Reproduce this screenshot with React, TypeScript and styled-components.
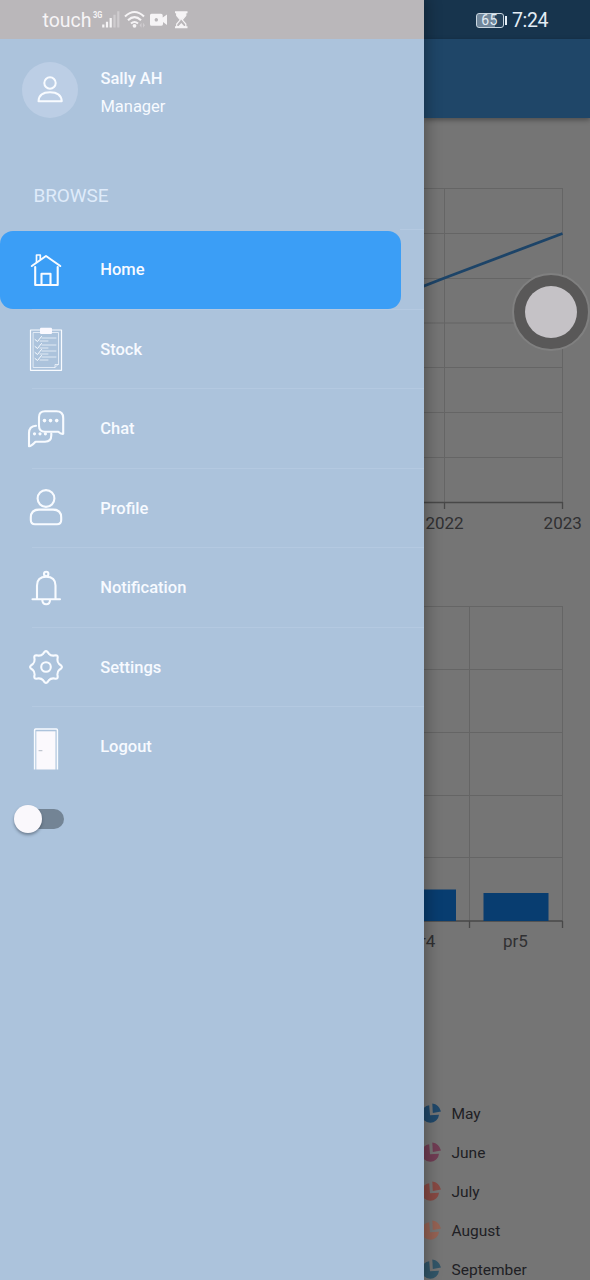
import React from 'react';
import styled, { createGlobalStyle } from 'styled-components';

const Global = createGlobalStyle`
  body { margin: 0; font-family: Roboto, "Liberation Sans", sans-serif; background: #757575; }
  svg { display: block; flex: none; }
`;

const Screen = styled.div`
  position: relative;
  display: flex;
  width: 590px;
  height: 1280px;
  overflow: hidden;
  background: #757575;
`;

const Drawer = styled.aside`
  position: relative;
  z-index: 1;
  display: flex;
  flex-direction: column;
  flex: none;
  width: 423.5px;
  background: #acc3dc;
  box-shadow: 0 0 14px 3px rgba(0, 0, 0, 0.3);
`;

const Page = styled.main`
  display: flex;
  flex-direction: column;
  flex: 1;
  min-width: 0;
`;

const StatusBar = styled.div<{ $dark?: boolean }>`
  display: flex;
  align-items: center;
  box-sizing: border-box;
  flex: none;
  height: 39px;
  padding: ${(p) => (p.$dark ? '2px 0 0 52px' : '2px 0 0 42.5px')};
  background: ${(p) => (p.$dark ? '#17344d' : '#bab7ba')};
  color: ${(p) => (p.$dark ? '#e3edf5' : '#f6f4f6')};
`;

const Carrier = styled.span`
  width: 49.5px;
  font-size: 19.5px;
  letter-spacing: 0;
`;

const Battery = styled.span`
  display: flex;
  align-items: center;
  justify-content: center;
  box-sizing: border-box;
  width: 28px;
  height: 15px;
  border: 1px solid #c9d6e0;
  border-radius: 3px;
  background: linear-gradient(90deg, #71879b 68%, #25425b 68%);
  font-size: 14px;
  letter-spacing: 0.3px;
  line-height: 13px;
`;

const BatteryTip = styled.i`
  width: 2px;
  height: 9px;
  margin-left: 1px;
  background: #e3edf5;
`;

const Clock = styled.span`
  margin-left: 5.5px;
  font-size: 19.5px;
  letter-spacing: -0.35px;
`;

const AppBar = styled.header`
  flex: none;
  height: 79px;
  background: #1f4668;
  box-shadow: 0 2px 5px rgba(0, 0, 0, 0.35);
`;

const Account = styled.section`
  display: flex;
  align-items: center;
  gap: 22px;
  height: 56px;
  padding: 23px 0 0 22px;
`;

const Avatar = styled.div`
  display: flex;
  align-items: center;
  justify-content: center;
  width: 56px;
  height: 56px;
  border-radius: 50%;
  background: #bccee5;
`;

const Identity = styled.div`
  display: flex;
  flex-direction: column;
  gap: 8px;
  padding: 5px 0 0 0.4px;
  color: #f7faff;
  font-size: 16.5px;
  line-height: 20px;
`;

const Name = styled.strong`
  font-weight: 500;
`;

const SectionTitle = styled.h2`
  margin: 66px 0 0 33.5px;
  color: #dfebfa;
  font-size: 19px;
  font-weight: 400;
  letter-spacing: -0.1px;
  line-height: 24px;
`;

const Menu = styled.nav`
  display: flex;
  flex-direction: column;
  margin-top: 21px;
`;

const Item = styled.div<{ $active?: boolean }>`
  display: flex;
  align-items: center;
  box-sizing: border-box;
  height: 79.5px;
  padding: 2px 22.5px 0 0;
  background: linear-gradient(#b4c9e1, #b4c9e1) right top / ${(p) => (p.$active ? '24px' : '392px')} 1px no-repeat;
`;

const ItemBody = styled.div<{ $active?: boolean }>`
  display: flex;
  align-items: center;
  box-sizing: border-box;
  width: 401px;
  height: 77.5px;
  padding-left: 24px;
  gap: 32.2px;
  border-radius: 13px;
  background: ${(p) => (p.$active ? '#3b9ef6' : 'transparent')};
  color: #f7faff;
  font-size: 16.5px;
  font-weight: 500;
`;

const Track = styled.div`
  display: flex;
  align-items: center;
  width: 46px;
  height: 20px;
  margin: 23.5px 0 0 18px;
  border-radius: 10px;
  background: #738495;
`;

const Thumb = styled.div`
  flex: none;
  width: 28px;
  height: 28px;
  margin-left: -4px;
  border-radius: 50%;
  background: #faf8fc;
  box-shadow: 0 2px 3px rgba(40, 50, 65, 0.45);
`;

const Chart = styled.svg<{ $top: number }>`
  margin-top: ${(p) => p.$top}px;
  font-size: 17px;
`;

const Legend = styled.ul`
  display: flex;
  flex-direction: column;
  margin: 134px 0 0;
  padding: 0;
  list-style: none;
`;

const LegendRow = styled.li`
  display: flex;
  align-items: center;
  gap: 11px;
  height: 39px;
  color: #202024;
  font-size: 15.5px;
`;

const TouchRing = styled.div`
  position: absolute;
  z-index: 2;
  top: 273px;
  left: 512px;
  display: flex;
  align-items: center;
  justify-content: center;
  box-sizing: border-box;
  width: 78px;
  height: 78px;
  border: 2px solid #808080;
  border-radius: 50%;
  background: #595858;
`;

const TouchDot = styled.div`
  width: 52px;
  height: 52px;
  border-radius: 50%;
  background: #c5c2c6;
`;

const gearPath = (() => {
  const at = (r: number, deg: number) => {
    const a = (deg * Math.PI) / 180;
    return `${(22 + r * Math.sin(a)).toFixed(2)} ${(22 - r * Math.cos(a)).toFixed(2)}`;
  };
  let d = `M${at(15.3, -5)}`;
  for (let i = 0; i < 8; i++) {
    const a = i * 45;
    d += ` Q${at(16.6, a)} ${at(15.3, a + 5)} L${at(13.6, a + 12)} Q${at(12.2, a + 22.5)} ${at(13.6, a + 33)} L${at(15.3, a + 40)}`;
  }
  return d + 'Z';
})();

const drawings: Record<string, React.ReactNode> = {
  Home: (
    <g strokeWidth="2.1">
      <path d="M7.8 18 22 8 36.3 18M11.2 19V37H33.7V19M17.5 36V25.7H26.5V36" />
      <path d="M12.5 14V7H16.3V11" strokeWidth="1.7" />
    </g>
  ),
  Stock: (
    <>
      <path d="M6.5 3H37.5V43.3H6.5Z" strokeWidth="1.2" />
      <path d="M9.5 5.5H34.5V37L31 40.5H9.5ZM31 40.5V37.5H34.5" strokeWidth=".7" />
      <rect x="16" y=".8" width="12" height="6.2" rx="1" fill="#fbf9ff" stroke="none" />
      {[12, 19, 25, 31].map((y) => (
        <g key={y}>
          <path d={`M11 ${y + 0.5}l2.5 2 4-5`} strokeWidth="1" />
          <path d={`M18 ${y - 1}H32M16 ${y + 2}H24`} strokeWidth=".7" />
        </g>
      ))}
    </>
  ),
  Chat: (
    <>
      <path d="M21 4.3H32.5Q39.2 4.3 39.2 11V26.8Q37 27.3 34.3 24.7H21Q15 24.7 15 18.7V10.3Q15 4.3 21 4.3Z" />
      <path d="M12 18.7Q5 19.2 5 26V39.2Q7 39.6 11.5 34.8H21Q27.3 34.8 27.3 28.3V26.5" />
      <g fill="#f8fbff" stroke="none">
        {[20.5, 26.5, 32.7].map((x) => <circle key={x} cx={x} cy="13.6" r="1.8" />)}
        {[10.5, 16, 21.4].map((x) => <circle key={x} cx={x} cy="26.8" r="1.6" />)}
      </g>
    </>
  ),
  Profile: (
    <>
      <circle cx="22" cy="12.5" r="8.4" />
      <path d="M15 23.6H29Q37.2 23.6 37.2 31.5V34Q37.2 38.2 33 38.2H11Q6.8 38.2 6.8 34V31.5Q6.8 23.6 15 23.6Z" />
    </>
  ),
  Notification: (
    <>
      <circle cx="22.2" cy="8" r="2.2" />
      <path d="M13 33V19.5Q13 10.8 22.2 10.8T31.5 19.5V33M8.5 33.2H36M18.3 34Q18.5 38.3 22.2 38.3T26 34" />
    </>
  ),
  Settings: (
    <>
      <path d={gearPath} />
      <circle cx="22" cy="22" r="4.8" />
    </>
  ),
  Logout: (
    <>
      <path d="M10.6 44.5V5Q10.6 4 11.6 4H32.4Q33.4 4 33.4 5V44.5" strokeWidth="1.5" strokeLinecap="butt" />
      <path d="M12.3 6.3H31.5V44.5H12.3Z" fill="#fbf9fd" stroke="none" />
      <path d="M15 25.7H18" stroke="#b2bac5" strokeWidth="1" />
    </>
  ),
};

const MenuIcon = ({ name }: { name: string }) => (
  <svg width="44" height="44" overflow="visible" fill="none" stroke="#f8fbff" strokeWidth="2.1" strokeLinecap="round" strokeLinejoin="round">
    {drawings[name]}
  </svg>
);

const StatusIcons = () => (
  <svg width="100" height="27" fill="none" stroke="#f6f4f6">
    <text x="1" y="11" fill="#f6f4f6" stroke="none" fontSize="9.6" fontWeight="700" textLength="9.3" lengthAdjust="spacingAndGlyphs">3G</text>
    <path d="M11.3 17.5v3M15 14.8V20.5M18.7 11V20.5" strokeWidth="2.2" />
    <path d="M22.5 7.8V20.5M26.3 4.3V20.5" strokeWidth="2.2" opacity=".35" />
    <path d="M33 9.5Q42.5 0.5 52 9.5M36 13.2Q42.5 7 49 13.2M39 16.6Q42.5 13.4 46 16.6" strokeWidth="2.1" />
    <circle cx="42.5" cy="18.8" r="1.9" fill="#f6f4f6" stroke="none" />
    <path d="M47.5 18.3l2-2.5v5zM53 18.3l-2-2.5v5z" fill="#f6f4f6" opacity=".35" stroke="none" />
    <path fillRule="evenodd" d="M59.5 6.8H69Q70.7 6.8 70.7 8.3V10.6L75 7.5V18L71 15V17.2Q70.7 18.7 69 18.7H59.5Q58 18.7 58 17.2V8.3Q58 6.8 59.5 6.8ZM64.3 11.1a1.7 1.7 0 1 0 .01 0Z" fill="#f6f4f6" stroke="none" />
    <path d="M83 5.3H95.5M83 20.3H95.5" strokeWidth="2" />
    <path d="M84.7 6V8.5L88.3 12.8 84.7 17V19.5H93.8V17L90.2 12.8 93.8 8.5V6" strokeWidth="1.2" />
    <path d="M84.7 6H93.8V8.5L89.3 13 84.7 8.5ZM85.7 20 89.3 16 93 20Z" fill="#f6f4f6" stroke="none" />
  </svg>
);

const menu = ['Home', 'Stock', 'Chat', 'Profile', 'Notification', 'Settings', 'Logout'];

const months = [
  ['May', '#20486a'],
  ['June', '#713d54'],
  ['July', '#874943'],
  ['August', '#956253'],
  ['September', '#315568'],
];

const lineGrid = [0.5, 45.5, 90.5, 135, 179.5, 224.5, 269.5];
const barGrid = [0.5, 63.5, 126.5, 189.5, 251.5];

export default function App() {
  return (
    <>
      <Global />
      <Screen>
        <Drawer>
          <StatusBar>
            <Carrier>touch</Carrier>
            <StatusIcons />
          </StatusBar>
          <Account>
            <Avatar>
              <svg width="30" height="30" fill="none" stroke="#f8fbff" strokeWidth="2" strokeLinejoin="round">
                <circle cx="15" cy="8" r="5.7" />
                <path d="M3.5 26.2Q4 17.3 15 17.3T26.8 26.2Z" />
              </svg>
            </Avatar>
            <Identity>
              <Name>Sally AH</Name>
              <span>Manager</span>
            </Identity>
          </Account>
          <SectionTitle>BROWSE</SectionTitle>
          <Menu>
            {menu.map((name, i) => (
              <Item key={name} $active={i === 0}>
                <ItemBody $active={i === 0}>
                  <MenuIcon name={name} />
                  {name}
                </ItemBody>
              </Item>
            ))}
          </Menu>
          <Track>
            <Thumb />
          </Track>
        </Drawer>
        <Page>
          <StatusBar $dark>
            <Battery>65</Battery>
            <BatteryTip />
            <Clock>7:24</Clock>
          </StatusBar>
          <AppBar />
          <Chart $top={70} width="166" height="350" viewBox="424 0 166 350">
            <g stroke="#656565">
              {lineGrid.map((y) => <path key={y} d={`M420 ${y}H562.5`} />)}
              <path d="M444.5 0V314M562.5 0V314" />
            </g>
            <path d="M420 314.5H562.5M444.5 314V321M562.5 314V321" stroke="#484848" strokeWidth="1.3" />
            <path d="M420 99.5 444.5 90 562.5 45.5" stroke="#1d4468" strokeWidth="2.8" fill="none" />
            <g fill="#303032" textAnchor="middle">
              <text x="444.5" y="341">2022</text>
              <text x="562.7" y="341">2023</text>
            </g>
          </Chart>
          <Chart $top={68} width="166" height="354" viewBox="424 0 166 354">
            <g stroke="#656565">
              {barGrid.map((y) => <path key={y} d={`M420 ${y}H562.5`} />)}
              <path d="M469.5 0V315M562.5 0V315" />
            </g>
            <path d="M420 315H562.5M469.5 315V322M562.5 315V322" stroke="#484848" strokeWidth="1.3" />
            <path d="M420 283.5H456V315H420ZM483.5 287H548.5V315H483.5Z" fill="#083d70" />
            <g fill="#303032" textAnchor="middle">
              <text x="423" y="341">pr4</text>
              <text x="515.5" y="341">pr5</text>
            </g>
          </Chart>
          <Legend>
            {months.map(([label, color]) => (
              <LegendRow key={label}>
                <svg width="17" height="22" fill={color}>
                  <path d="M5.2 2.3L6 12.3 15 11.8A8.8 8.8 0 1 1 5.2 2.3Z" />
                  <path d="M8.3 0.6Q15 1.5 17 8.6L8.8 10Z" />
                </svg>
                {label}
              </LegendRow>
            ))}
          </Legend>
        </Page>
        <TouchRing>
          <TouchDot />
        </TouchRing>
      </Screen>
    </>
  );
}
